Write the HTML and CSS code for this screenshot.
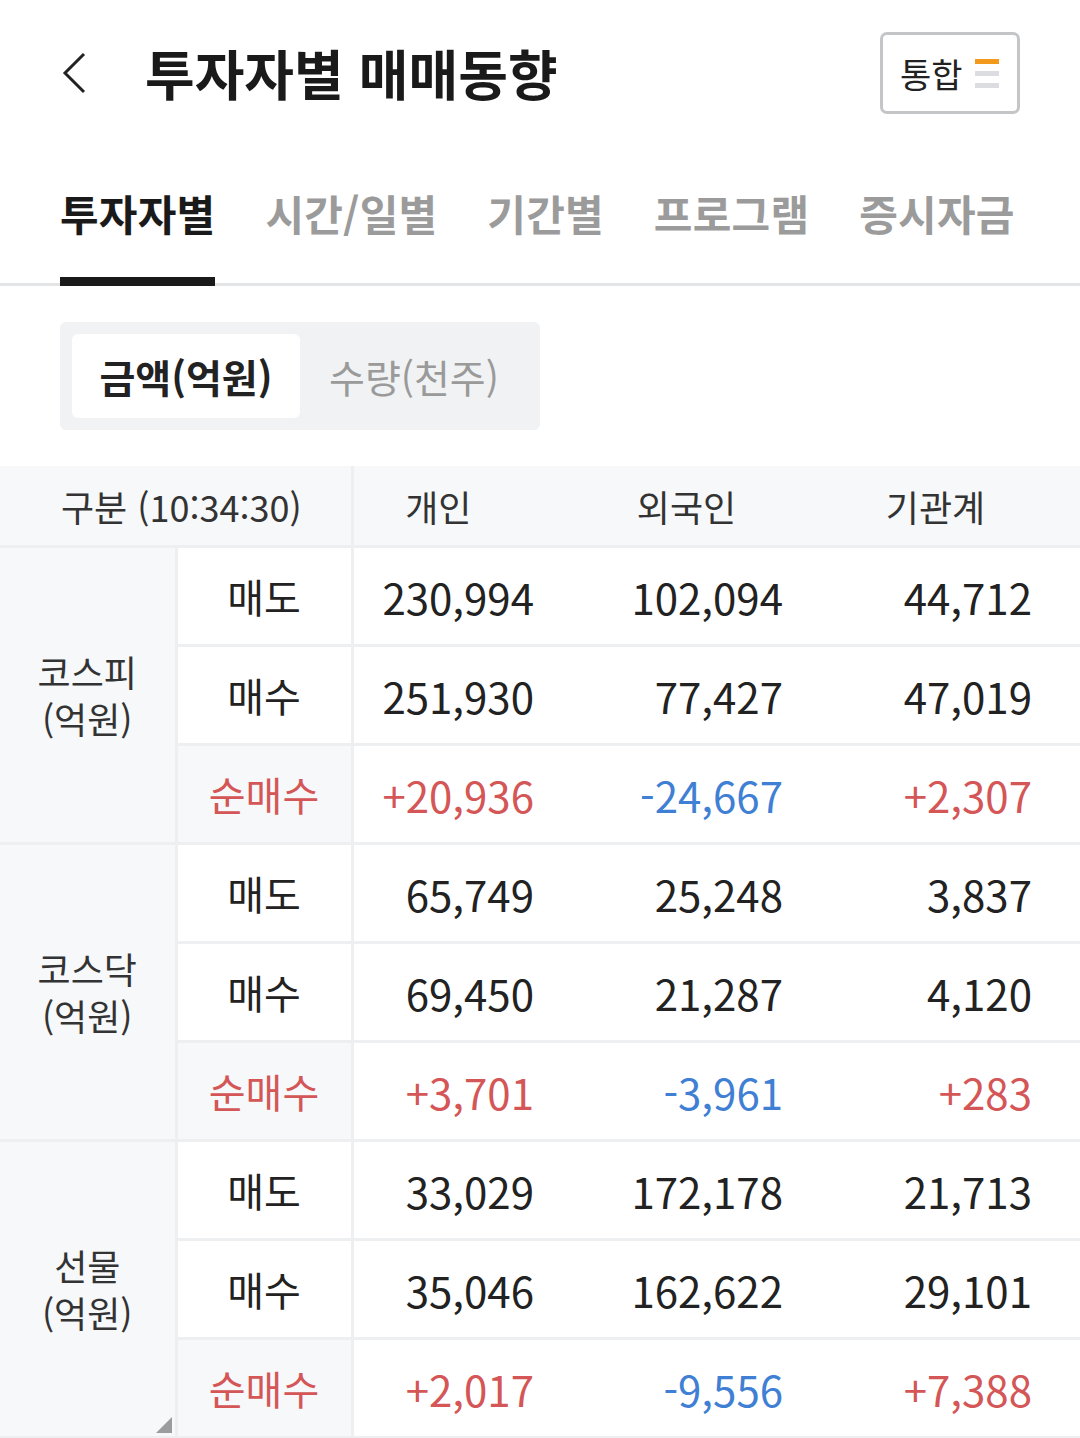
FILE: index.html
```html
<!DOCTYPE html>
<html lang="ko">
<head>
    <meta charset="UTF-8">
    <meta name="viewport" content="width=device-width, initial-scale=1.0">
    <title>투자자별 매매동향</title>
    <link rel="stylesheet" href="styles.css">
</head>
<body>

<!-- Top bar -->
<div class="topBar">
    <div class="titleGroup">
        <button class="backButton">
            <svg width="28" height="44" viewBox="0 0 28 44"><path d="M24 3 L5 22 L24 41" fill="none" stroke="#222" stroke-width="3"/></svg>
        </button>
        <h1 class="title">투자자별 매매동향</h1>
    </div>
    <button class="mergeButton">
        <span>통합</span>
        <span class="bars"><i class="on"></i><i></i><i></i></span>
    </button>
</div>

<!-- Tabs -->
<div class="tabs">
    <a href="#" class="tab active">투자자별</a>
    <a href="#" class="tab">시간/일별</a>
    <a href="#" class="tab">기간별</a>
    <a href="#" class="tab">프로그램</a>
    <a href="#" class="tab">증시자금</a>
</div>

<!-- Unit switch -->
<div class="segment">
    <button class="segBtn active">금액(억원)</button>
    <button class="segBtn">수량(천주)</button>
</div>

<!-- Table -->
<div class="tableWrap">
    <table class="trade">
        <colgroup>
            <col class="cGroup"><col class="cLabel"><col class="cNum"><col class="cNum"><col class="cNum">
        </colgroup>
        <thead>
            <tr>
                <th colspan="2" class="thFirst">구분 (10:34:30)</th>
                <th>개인</th>
                <th>외국인</th>
                <th>기관계</th>
            </tr>
        </thead>
        <tbody>
            <tr>
                <td rowspan="3" class="group">코스피<br>(억원)</td>
                <td class="label">매도</td>
                <td class="num">230,994</td><td class="num">102,094</td><td class="num">44,712</td>
            </tr>
            <tr>
                <td class="label">매수</td>
                <td class="num">251,930</td><td class="num">77,427</td><td class="num">47,019</td>
            </tr>
            <tr class="net">
                <td class="label">순매수</td>
                <td class="num up">+20,936</td><td class="num down">-24,667</td><td class="num up">+2,307</td>
            </tr>

            <tr>
                <td rowspan="3" class="group">코스닥<br>(억원)</td>
                <td class="label">매도</td>
                <td class="num">65,749</td><td class="num">25,248</td><td class="num">3,837</td>
            </tr>
            <tr>
                <td class="label">매수</td>
                <td class="num">69,450</td><td class="num">21,287</td><td class="num">4,120</td>
            </tr>
            <tr class="net">
                <td class="label">순매수</td>
                <td class="num up">+3,701</td><td class="num down">-3,961</td><td class="num up">+283</td>
            </tr>

            <tr>
                <td rowspan="3" class="group last">선물<br>(억원)</td>
                <td class="label">매도</td>
                <td class="num">33,029</td><td class="num">172,178</td><td class="num">21,713</td>
            </tr>
            <tr>
                <td class="label">매수</td>
                <td class="num">35,046</td><td class="num">162,622</td><td class="num">29,101</td>
            </tr>
            <tr class="net">
                <td class="label">순매수</td>
                <td class="num up">+2,017</td><td class="num down">-9,556</td><td class="num up">+7,388</td>
            </tr>
        </tbody>
    </table>
</div>

</body>
</html>
```

FILE: styles.css
```css
body {
    margin: 0;
    padding: 0;
    width: 1080px;
    overflow: hidden;
    background: #fff;
    color: #222;
    font-family: "Noto Sans CJK KR", "Noto Sans", sans-serif;
}

button {
    font-family: inherit;
    background: none;
    border: none;
    padding: 0;
    cursor: pointer;
}

/* Top bar */
.topBar {
    display: flex;
    justify-content: space-between;
    align-items: center;
    padding: 32px 60px 0 60px;
    height: 82px;
}

.titleGroup {
    display: flex;
    align-items: center;
}

.backButton {
    display: flex;
    width: 28px;
    height: 44px;
}

.title {
    margin: 0 0 0 57px;
    font-size: 54px;
    font-weight: 700;
    letter-spacing: 0;
    line-height: 1;
    color: #1a1a1a;
}

.mergeButton {
    display: flex;
    align-items: center;
    gap: 12px;
    box-sizing: border-box;
    width: 140px;
    height: 82px;
    padding-left: 17px;
    border: 3px solid #c4c5c7;
    border-radius: 7px;
    font-size: 34px;
    color: #222;
}

.bars {
    display: flex;
    flex-direction: column;
    gap: 7px;
}

.bars i {
    display: block;
    width: 24px;
    height: 5px;
    background: #dcdde0;
}

.bars i.on {
    background: #f39a1e;
}

/* Tabs */
.tabs {
    display: flex;
    gap: 50px;
    margin-top: 74px;
    padding-left: 60px;
    border-bottom: 3px solid #e3e4e6;
}

.tab {
    position: relative;
    padding-bottom: 45px;
    font-size: 42px;
    font-weight: 700;
    line-height: 50px;
    letter-spacing: 0.2px;
    color: #9b9b9b;
    text-decoration: none;
}

.tab.active {
    color: #1a1a1a;
}

.tab.active::after {
    content: "";
    position: absolute;
    left: 0;
    right: 0;
    bottom: -3px;
    height: 9px;
    background: #1a1a1a;
}

/* Unit switch */
.segment {
    display: flex;
    margin: 36px 0 0 60px;
    box-sizing: border-box;
    width: 480px;
    height: 108px;
    padding: 12px;
    background: #f1f2f4;
    border-radius: 6px;
}

.segBtn {
    width: 228px;
    height: 84px;
    border-radius: 6px;
    font-size: 39px;
    color: #9a9a9a;
}

.segBtn.active {
    background: #fff;
    color: #222;
    font-weight: 700;
}

/* Table */
.tableWrap {
    margin-top: 36px;
    width: 1080px;
    overflow: hidden;
}

.trade {
    border-collapse: collapse;
    table-layout: fixed;
    width: 1099px;
}

.cGroup, .cLabel {
    width: 176px;
}

.cNum {
    width: 249px;
}

.trade th {
    height: 79px;
    padding: 0 78px 0 0;
    background: #f7f8fa;
    border-bottom: 3px solid #eeeff1;
    font-size: 36px;
    font-weight: 400;
    color: #333;
    text-align: center;
}

.trade th.thFirst {
    padding: 0 0 0 12px;
    border-right: 3px solid #eeeff1;
}

.trade td {
    height: 96px;
    padding: 0;
    border-bottom: 3px solid #eeeff1;
    font-size: 40px;
    color: #222;
}

.trade td.group {
    position: relative;
    background: #f7f8fa;
    border-right: 3px solid #eeeff1;
    font-size: 36px;
    line-height: 47px;
    color: #333;
    text-align: center;
}

.trade td.group.last::after {
    content: "";
    position: absolute;
    right: 3px;
    bottom: 3px;
    border-style: solid;
    border-width: 0 0 16px 16px;
    border-color: transparent transparent #9c9c9c transparent;
}

.trade td.label {
    border-right: 3px solid #eeeff1;
    text-align: center;
}

.trade tr.net td.label {
    background: #f7f8fa;
    color: #d45656;
}

.trade td.num {
    padding-right: 67px;
    font-size: 42px;
    text-align: right;
}

.trade td.up {
    color: #d45656;
}

.trade td.down {
    color: #3f80d4;
}
```
